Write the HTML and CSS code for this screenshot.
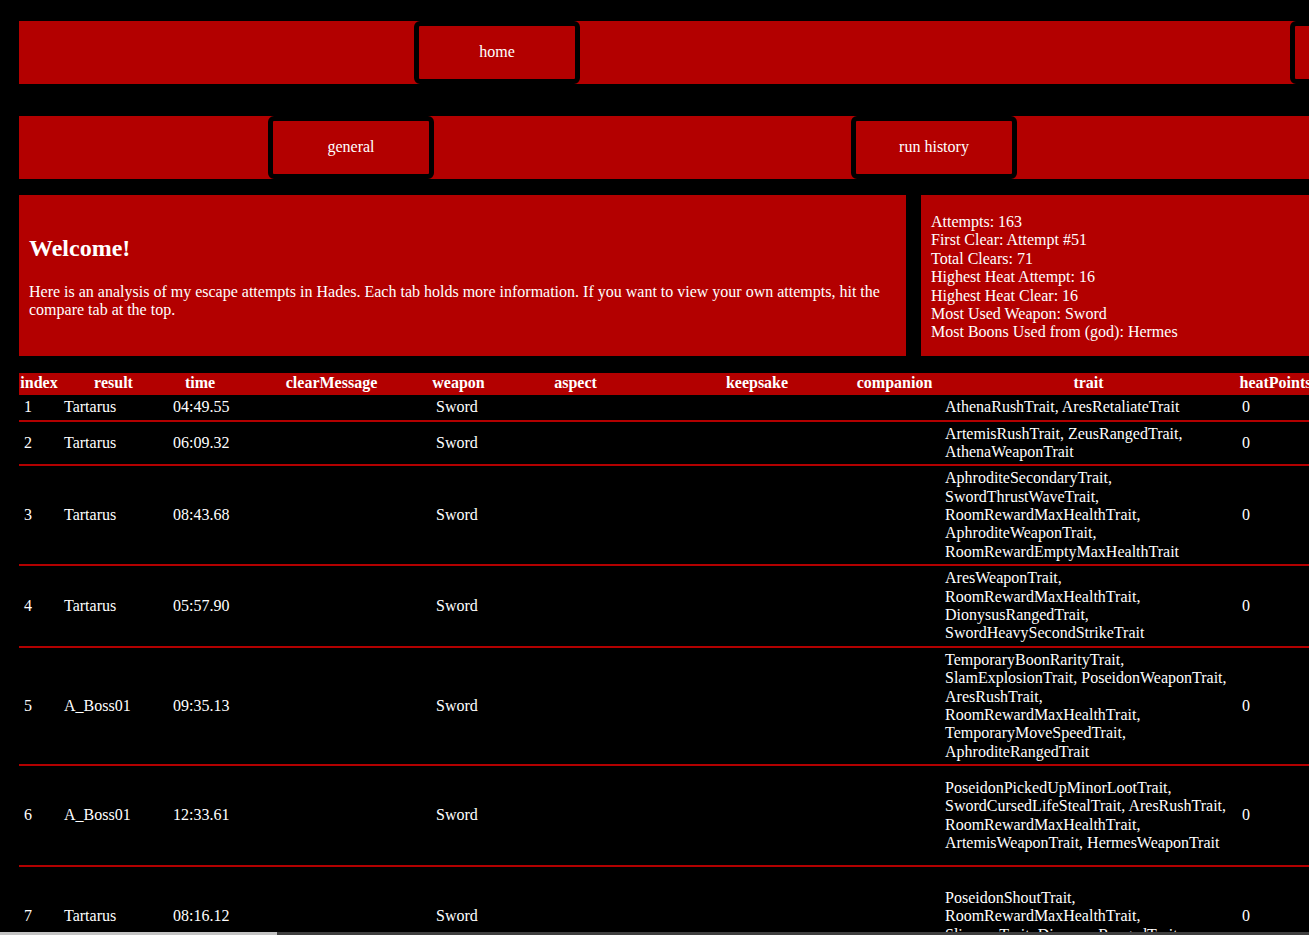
FILE: index.html
```html
<!DOCTYPE html>
<html lang="en">
<head>
<meta charset="utf-8">
<title>Hades Escape Attempts</title>
<link rel="stylesheet" href="styles.css">
</head>
<body>
<div class="page">
  <nav class="nav nav-main">
    <a class="tab" href="#">home</a>
    <a class="tab" href="#">compare</a>
  </nav>

  <nav class="nav nav-sub">
    <a class="tab" href="#">general</a>
    <a class="tab" href="#">run history</a>
  </nav>

  <section class="intro">
    <div class="welcome">
      <div class="welcome-inner">
        <h2 class="welcome-title">Welcome!</h2>
        <p class="welcome-text">Here is an analysis of my escape attempts in Hades. Each tab holds more information. If you want to view your own attempts, hit the compare tab at the top.</p>
      </div>
    </div>
    <div class="stats">
      <div>Attempts: 163</div>
      <div>First Clear: Attempt #51</div>
      <div>Total Clears: 71</div>
      <div>Highest Heat Attempt: 16</div>
      <div>Highest Heat Clear: 16</div>
      <div>Most Used Weapon: Sword</div>
      <div>Most Boons Used from (god): Hermes</div>
    </div>
  </section>

  <table class="runs">
    <colgroup>
      <col class="c-index">
      <col class="c-result">
      <col class="c-time">
      <col class="c-clear">
      <col class="c-weapon">
      <col class="c-aspect">
      <col class="c-keepsake">
      <col class="c-companion">
      <col class="c-trait">
      <col class="c-heat">
    </colgroup>
    <thead>
      <tr>
        <th>index</th><th>result</th><th>time</th><th>clearMessage</th><th>weapon</th><th>aspect</th><th>keepsake</th><th>companion</th><th>trait</th><th>heatPoints</th>
      </tr>
    </thead>
    <tbody>
      <tr>
        <td>1</td><td>Tartarus</td><td>04:49.55</td><td></td><td>Sword</td><td></td><td></td><td></td>
        <td>AthenaRushTrait, AresRetaliateTrait</td><td>0</td>
      </tr>
      <tr>
        <td>2</td><td>Tartarus</td><td>06:09.32</td><td></td><td>Sword</td><td></td><td></td><td></td>
        <td>ArtemisRushTrait, ZeusRangedTrait, AthenaWeaponTrait</td><td>0</td>
      </tr>
      <tr>
        <td>3</td><td>Tartarus</td><td>08:43.68</td><td></td><td>Sword</td><td></td><td></td><td></td>
        <td>AphroditeSecondaryTrait, SwordThrustWaveTrait, RoomRewardMaxHealthTrait, AphroditeWeaponTrait, RoomRewardEmptyMaxHealthTrait</td><td>0</td>
      </tr>
      <tr>
        <td>4</td><td>Tartarus</td><td>05:57.90</td><td></td><td>Sword</td><td></td><td></td><td></td>
        <td>AresWeaponTrait, RoomRewardMaxHealthTrait, DionysusRangedTrait, SwordHeavySecondStrikeTrait</td><td>0</td>
      </tr>
      <tr>
        <td>5</td><td>A_Boss01</td><td>09:35.13</td><td></td><td>Sword</td><td></td><td></td><td></td>
        <td>TemporaryBoonRarityTrait, SlamExplosionTrait, PoseidonWeaponTrait, AresRushTrait, RoomRewardMaxHealthTrait, TemporaryMoveSpeedTrait, AphroditeRangedTrait</td><td>0</td>
      </tr>
      <tr class="row-tall">
        <td>6</td><td>A_Boss01</td><td>12:33.61</td><td></td><td>Sword</td><td></td><td></td><td></td>
        <td>PoseidonPickedUpMinorLootTrait, SwordCursedLifeStealTrait, AresRushTrait, RoomRewardMaxHealthTrait, ArtemisWeaponTrait, HermesWeaponTrait</td><td>0</td>
      </tr>
      <tr class="row-tall">
        <td>7</td><td>Tartarus</td><td>08:16.12</td><td></td><td>Sword</td><td></td><td></td><td></td>
        <td>PoseidonShoutTrait, RoomRewardMaxHealthTrait, SlipperyTrait, DionysusRangedTrait</td><td>0</td>
      </tr>
      <tr>
        <td>8</td><td>Tartarus</td><td>07:02.44</td><td></td><td>Sword</td><td></td><td></td><td></td>
        <td>ZeusWeaponTrait, RoomRewardMaxHealthTrait</td><td>0</td>
      </tr>
    </tbody>
  </table>
</div>
<div class="hscroll"><div class="hscroll-thumb"></div></div>
</body>
</html>
```

FILE: styles.css
```css
html {
  overflow: hidden;
}

body {
  margin: 0;
  background: #000;
  color: #fff;
  font-family: "Liberation Serif", "Times New Roman", serif;
  font-size: 16px;
  line-height: 1.15;
}

.page {
  width: 1800px;
  padding: 21px 19px 0;
}

.nav {
  display: flex;
  height: 63px;
  background: #b30000;
}

.nav-main {
  padding-left: 395px;
  gap: 710px;
}

.nav-sub {
  margin-top: 32px;
  padding-left: 249px;
  gap: 417px;
}

.tab {
  box-sizing: border-box;
  width: 166px;
  height: 63px;
  display: flex;
  align-items: center;
  justify-content: center;
  border: 5px solid #000;
  border-radius: 6px;
  color: #fff;
  text-decoration: none;
}

.intro {
  display: flex;
  gap: 15px;
  margin-top: 16px;
}

.welcome {
  box-sizing: border-box;
  width: 887px;
  flex: none;
  display: flex;
  align-items: center;
  padding: 0 10px;
  background: #b30000;
}

.welcome-title {
  font-size: 24px;
  margin: 20px 0;
}

.welcome-text {
  margin: 16px 0;
}

.stats {
  flex: 1;
  padding: 18px 10px 14px;
  background: #b30000;
}

.runs {
  margin-top: 17px;
  table-layout: fixed;
  border-collapse: collapse;
  width: 1295px;
}

.c-index { width: 40px; }
.c-result { width: 109px; }
.c-time { width: 64px; }
.c-clear { width: 199px; }
.c-weapon { width: 55px; }
.c-aspect { width: 179px; }
.c-keepsake { width: 184px; }
.c-companion { width: 91px; }
.c-trait { width: 297px; }
.c-heat { width: 77px; }

.runs th {
  padding: 1px;
  background: #b30000;
  border-bottom: 2px solid #b30000;
  font-weight: bold;
  text-align: center;
  white-space: nowrap;
}

.runs td {
  padding: 3px 5px;
  border-bottom: 2px solid #b30000;
  text-align: left;
  vertical-align: middle;
}

.row-tall {
  height: 101px;
}

.hscroll {
  position: fixed;
  left: 0;
  right: 0;
  bottom: 0;
  height: 3px;
  background: #3f3f3f;
}

.hscroll-thumb {
  width: 277px;
  height: 100%;
  background: #c3c3c3;
}
```
